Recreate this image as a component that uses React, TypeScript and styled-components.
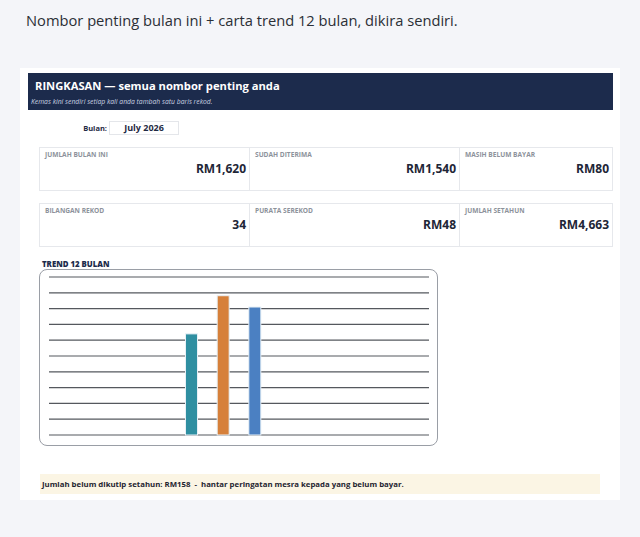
import React from "react";
import styled, { createGlobalStyle } from "styled-components";

const GlobalStyle = createGlobalStyle`
  html, body { margin: 0; padding: 0; background: #f4f5f9; }
  body { font-family: "Open Sans", "Liberation Sans", sans-serif; }
`;

const Page = styled.div`
  width: 640px;
  height: 537px;
  padding-top: 9px;
  box-sizing: border-box;
`;

const Headline = styled.h1`
  margin: 0 0 0 26px;
  font-family: "Open Sans", sans-serif;
  font-weight: 400;
  font-size: 14.7px;
  line-height: 22px;
  color: #2b2f36;
`;

const Sheet = styled.div`
  margin: 37px 0 0 20px;
  width: 600px;
  background: #ffffff;
  padding: 5px 7px 6px 8px;
  box-sizing: border-box;
  font-family: "Open Sans", sans-serif;
`;

const Banner = styled.div`
  background: #1c2b4c;
  height: 37px;
  box-sizing: border-box;
  padding: 4px 0 0 3px;
  display: flex;
  flex-direction: column;
`;

const BannerTitle = styled.div`
  color: #ffffff;
  font-weight: 700;
  font-size: 11.2px;
  line-height: 18px;
  padding-left: 4px;
`;

const BannerSub = styled.div`
  color: #c9d1e0;
  font-style: italic;
  font-size: 6.8px;
  line-height: 10px;
  margin-top: 2px;
`;

const MonthRow = styled.div`
  display: flex;
  align-items: center;
  margin: 11px 0 0 0;
  height: 14px;
`;

const MonthLabel = styled.div`
  width: 79px;
  text-align: right;
  font-weight: 700;
  font-size: 7.5px;
  color: #1f2a44;
  padding-right: 2px;
`;

const MonthBox = styled.div`
  width: 70px;
  height: 14px;
  box-sizing: border-box;
  border: 1px solid #e4e6ea;
  text-align: center;
  font-weight: 700;
  font-size: 9px;
  line-height: 12px;
  color: #1f2a44;
`;

const KpiGrid = styled.div<{ $top: number }>`
  display: grid;
  grid-template-columns: 210px 210px 153px;
  margin: ${(p) => p.$top}px 0 0 12px;
`;

const KpiCell = styled.div`
  height: 44px;
  box-sizing: border-box;
  border: 1px solid #e6e8ec;
  margin-left: -1px;
  padding: 2px 3px 0 5px;
  display: flex;
  flex-direction: column;
`;

const KpiLabel = styled.div`
  font-size: 6.6px;
  font-weight: 700;
  color: #8d929b;
  text-transform: uppercase;
  line-height: 9px;
`;

const KpiValue = styled.div`
  text-align: right;
  font-size: 12px;
  font-weight: 700;
  color: #1e2637;
  line-height: 18px;
  margin-top: 1px;
`;

const TrendTitle = styled.div`
  margin: 12px 0 0 14px;
  font-size: 7.8px;
  font-weight: 800;
  color: #1c2b4c;
  line-height: 10px;
`;

const ChartBox = styled.div`
  margin: 0 0 0 11px;
  width: 399px;
  height: 177px;
  box-sizing: border-box;
  border: 1px solid #9a9ea6;
  border-radius: 8px;
  background: #ffffff;
`;

const Note = styled.div`
  margin: 28px 0 0 12px;
  width: 560px;
  height: 20px;
  background: #fbf5e4;
  font-size: 7.8px;
  font-weight: 700;
  color: #1e2430;
  line-height: 20px;
  padding-left: 2px;
  box-sizing: border-box;
  white-space: pre;
`;

const kpiRow1 = [
  { label: "Jumlah bulan ini", value: "RM1,620" },
  { label: "Sudah diterima", value: "RM1,540" },
  { label: "Masih belum bayar", value: "RM80" },
];
const kpiRow2 = [
  { label: "Bilangan rekod", value: "34" },
  { label: "Purata serekod", value: "RM48" },
  { label: "Jumlah setahun", value: "RM4,663" },
];

const months = [0, 0, 0, 0, 1280, 1763, 1620, 0, 0, 0, 0, 0];
const barColors = ["#2f8fa1", "#d6803a", "#4b80c2"];

function TrendChart() {
  const left = 9;
  const right = 389;
  const top = 7;
  const bottom = 165;
  const max = 2000;
  const lines = Array.from({ length: 11 }, (_, i) => top + (i * (bottom - top)) / 10);
  const slot = (right - left) / 12;
  let colorIdx = 0;
  return (
    <svg width="397" height="175" viewBox="0 0 397 175">
      {lines.map((y, i) => (
        <line key={i} x1={left} x2={right} y1={y} y2={y} stroke="#55585e" strokeWidth="1.2" />
      ))}
      {months.map((v, i) => {
        if (!v) return null;
        const h = (v / max) * (bottom - top);
        const cx = left + slot * (i + 0.5);
        const c = barColors[colorIdx++ % barColors.length];
        return (
          <rect
            key={i}
            x={cx - 6}
            y={bottom - h}
            width={12}
            height={h}
            fill={c}
            stroke="#e8f0f6"
            strokeWidth="1"
          />
        );
      })}
    </svg>
  );
}

export default function App() {
  return (
    <>
      <GlobalStyle />
      <Page>
        <Headline>Nombor penting bulan ini + carta trend 12 bulan, dikira sendiri.</Headline>
        <Sheet>
          <Banner>
            <BannerTitle>RINGKASAN — semua nombor penting anda</BannerTitle>
            <BannerSub>Kemas kini sendiri setiap kali anda tambah satu baris rekod.</BannerSub>
          </Banner>
          <MonthRow>
            <MonthLabel>Bulan:</MonthLabel>
            <MonthBox>July 2026</MonthBox>
          </MonthRow>
          <KpiGrid $top={12}>
            {kpiRow1.map((k) => (
              <KpiCell key={k.label}>
                <KpiLabel>{k.label}</KpiLabel>
                <KpiValue>{k.value}</KpiValue>
              </KpiCell>
            ))}
          </KpiGrid>
          <KpiGrid $top={12}>
            {kpiRow2.map((k) => (
              <KpiCell key={k.label}>
                <KpiLabel>{k.label}</KpiLabel>
                <KpiValue>{k.value}</KpiValue>
              </KpiCell>
            ))}
          </KpiGrid>
          <TrendTitle>TREND 12 BULAN</TrendTitle>
          <ChartBox>
            <TrendChart />
          </ChartBox>
          <Note>{"Jumlah belum dikutip setahun: RM158  -  hantar peringatan mesra kepada yang belum bayar."}</Note>
        </Sheet>
      </Page>
    </>
  );
}
